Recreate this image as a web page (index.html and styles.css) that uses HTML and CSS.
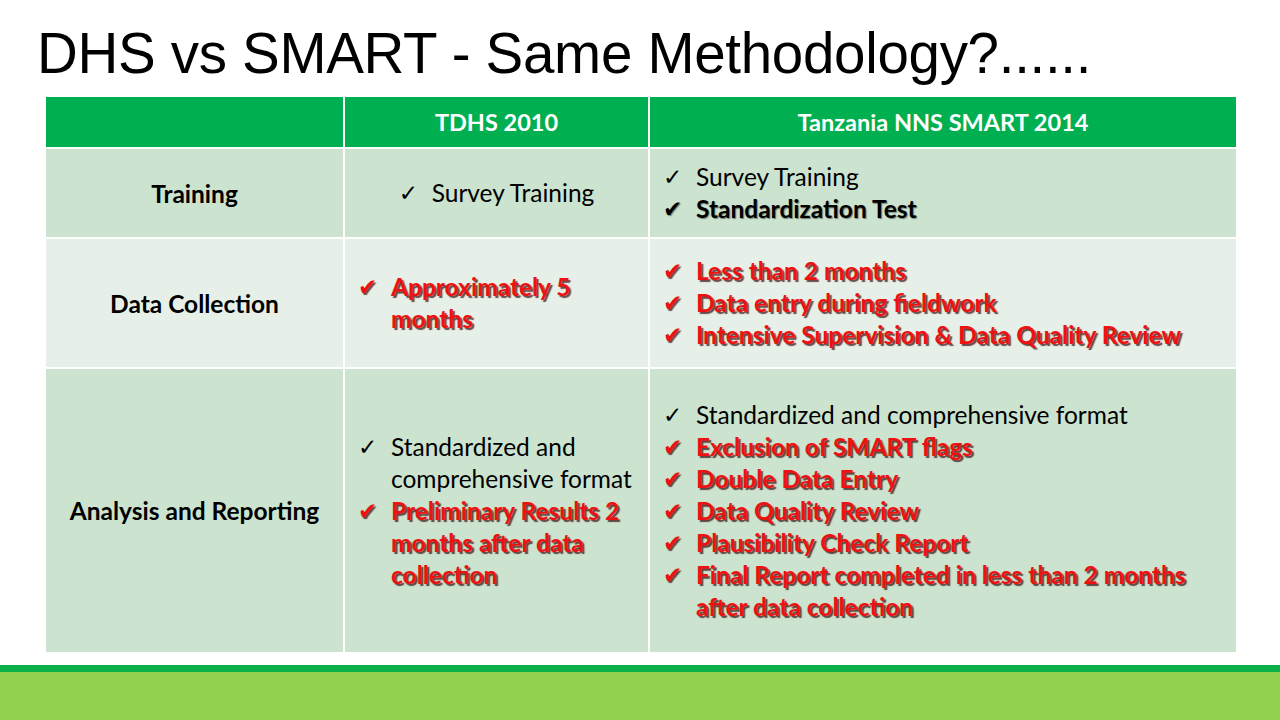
FILE: index.html
```html
<!DOCTYPE html>
<html>
<head>
<meta charset="utf-8">
<link rel="stylesheet" href="styles.css">
</head>
<body>
<div class="slide">
  <h1 class="title">DHS vs SMART - Same Methodology?......</h1>
  <table class="grid">
    <colgroup>
      <col class="c1"><col class="c2"><col class="c3">
    </colgroup>
    <thead>
      <tr class="head">
        <th></th>
        <th>TDHS 2010</th>
        <th>Tanzania NNS SMART 2014</th>
      </tr>
    </thead>
    <tbody>
      <tr class="r1 dark">
        <td class="label">Training</td>
        <td class="center">
          <ul class="list inline">
            <li><span class="ck">✓</span><span>Survey Training</span></li>
          </ul>
        </td>
        <td>
          <ul class="list">
            <li><span class="ck">✓</span><span>Survey Training</span></li>
            <li class="strong"><span class="ck">✔</span><span>Standardization Test</span></li>
          </ul>
        </td>
      </tr>
      <tr class="r2 light">
        <td class="label">Data Collection</td>
        <td>
          <ul class="list">
            <li class="red"><span class="ck">✔</span><span>Approximately 5 months</span></li>
          </ul>
        </td>
        <td>
          <ul class="list">
            <li class="red"><span class="ck">✔</span><span>Less than 2 months</span></li>
            <li class="red"><span class="ck">✔</span><span>Data entry during fieldwork</span></li>
            <li class="red"><span class="ck">✔</span><span>Intensive Supervision &amp; Data Quality Review</span></li>
          </ul>
        </td>
      </tr>
      <tr class="r3 dark">
        <td class="label">Analysis and Reporting</td>
        <td>
          <ul class="list">
            <li><span class="ck">✓</span><span>Standardized and comprehensive format</span></li>
            <li class="red"><span class="ck">✔</span><span>Preliminary Results 2 months after data collection</span></li>
          </ul>
        </td>
        <td>
          <ul class="list">
            <li><span class="ck">✓</span><span>Standardized and comprehensive format</span></li>
            <li class="red"><span class="ck">✔</span><span>Exclusion of SMART flags</span></li>
            <li class="red"><span class="ck">✔</span><span>Double Data Entry</span></li>
            <li class="red"><span class="ck">✔</span><span>Data Quality Review</span></li>
            <li class="red"><span class="ck">✔</span><span>Plausibility Check Report</span></li>
            <li class="red"><span class="ck">✔</span><span>Final Report completed in less than 2 months after data collection</span></li>
          </ul>
        </td>
      </tr>
    </tbody>
  </table>
  <div class="footer">
    <div class="stripe"></div>
    <div class="band"></div>
  </div>
</div>
</body>
</html>
```

FILE: styles.css
```css
html, body {
  margin: 0;
  padding: 0;
  background: #ffffff;
}
.slide {
  width: 1280px;
  height: 720px;
  position: relative;
  overflow: hidden;
  background: #ffffff;
  display: flex;
  flex-direction: column;
}
.title {
  margin: 0;
  padding: 23px 0 0 37px;
  height: 75px;
  box-sizing: border-box;
  font-family: "Liberation Sans", Arial, sans-serif;
  font-weight: normal;
  font-size: 56.5px;
  line-height: 62px;
  color: #000000;
  letter-spacing: -0.3px;
  white-space: nowrap;
}
.grid {
  margin: 22px 0 0 46px;
  width: 1190px;
  border-collapse: collapse;
  font-family: Lato, "Open Sans", sans-serif;
  font-size: 24.5px;
  color: #000000;
}
.c1 { width: 298px; }
.c2 { width: 305px; }
.c3 { width: 587px; }
.grid th, .grid td {
  border: 2px solid #ffffff;
  padding: 0;
  vertical-align: middle;
}
.grid tr:first-child th { border-top: 0; }
.grid th:first-child, .grid td:first-child { border-left: 0; }
.grid th:last-child, .grid td:last-child { border-right: 0; }
.head th {
  background: #00b050;
  color: #ffffff;
  font-weight: bold;
  font-size: 23.5px;
  height: 50px;
  text-align: center;
}
.dark td { background: #cbe3cf; }
.light td { background: #e6f0e8; }
.r1 td { height: 88px; }
.r2 td { height: 128px; }
.r3 td { height: 283px; }
.label {
  text-align: center;
  font-weight: bold;
  font-size: 24.5px;
}
.center { text-align: center; }
.list {
  list-style: none;
  margin: 0;
  padding: 0 4px 0 13px;
  line-height: 32px;
}
.list li {
  display: flex;
  text-align: left;
}
.list.inline {
  display: inline-block;
  padding: 0;
}
.ck {
  flex: none;
  width: 33px;
  font-family: "DejaVu Sans", sans-serif;
  font-size: 23px;
  line-height: 32px;
}
.strong span:last-child {
  font-weight: bold;
  text-shadow: 1px 1px 1px rgba(0, 0, 0, 0.45);
}
.strong .ck {
  text-shadow: 1px 1px 1px rgba(0, 0, 0, 0.45);
}
.red {
  color: #ee1111;
  font-weight: bold;
  text-shadow: 2px 2px 1px rgba(50, 0, 0, 0.7);
}
.red .ck {
  font-weight: normal;
  text-shadow: 1.5px 1.5px 1px rgba(50, 0, 0, 0.7);
}
.footer {
  margin-top: auto;
  display: flex;
  flex-direction: column;
}
.stripe {
  height: 7px;
  background: #0cb04a;
}
.band {
  height: 48px;
  background: #92d050;
}
```
